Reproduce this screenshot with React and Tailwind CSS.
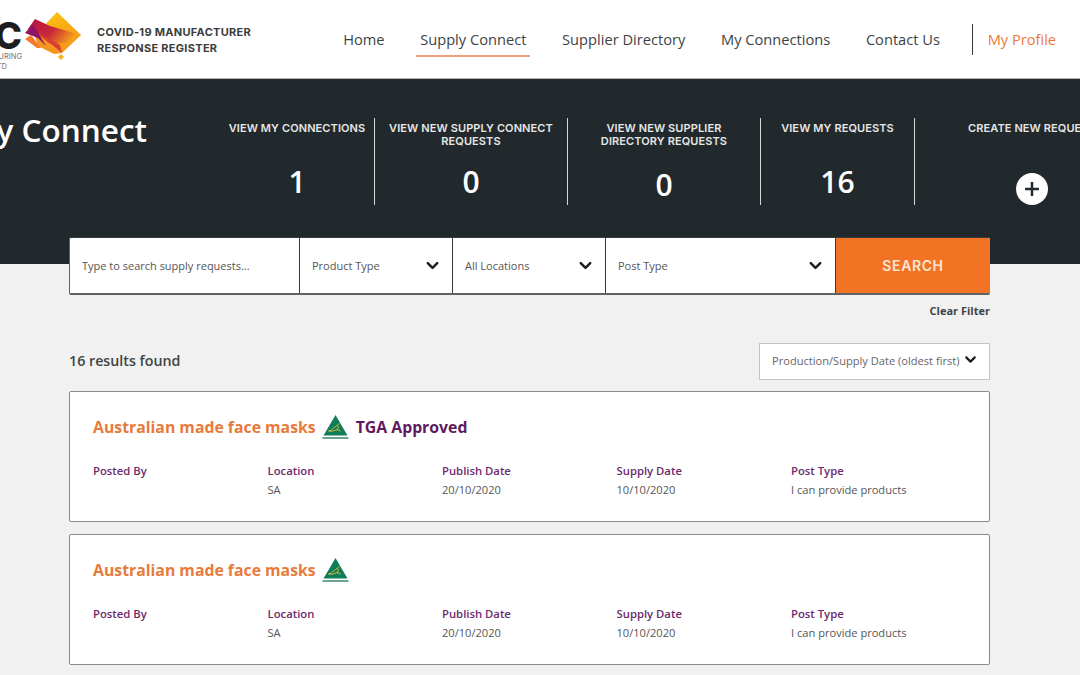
import React from 'react'
import { ChevronDown } from 'lucide-react'

const navItems = ['Home', 'Supply Connect', 'Supplier Directory', 'My Connections', 'Contact Us']

const stats = [
  { label: 'VIEW MY CONNECTIONS', value: '1', width: 'w-[155px] px-[4px]', pad: 'pt-[29px]' },
  { label: 'VIEW NEW SUPPLY CONNECT REQUESTS', value: '0', width: 'w-[193px] px-[4px]', pad: 'pt-[16px]' },
  { label: 'VIEW NEW SUPPLIER DIRECTORY REQUESTS', value: '0', width: 'w-[193px] px-[24px]', pad: 'pt-[19px]' },
  { label: 'VIEW MY REQUESTS', value: '16', width: 'w-[154px] px-[4px]', pad: 'pt-[29px]' },
]

const Logo = () => (
  <svg className="w-[60px] h-[50px] shrink-0 -mt-[4px]" viewBox="24 12 60 50">
    <defs>
      <linearGradient id="band" x1="0" y1="0" x2="1" y2="0.4">
        <stop offset="0" stopColor="#b5143f" />
        <stop offset="0.55" stopColor="#c9283a" />
        <stop offset="1" stopColor="#f7a01a" />
      </linearGradient>
      <linearGradient id="gold" x1="0" y1="0" x2="0.6" y2="1">
        <stop offset="0" stopColor="#fdc70f" />
        <stop offset="1" stopColor="#f7941d" />
      </linearGradient>
    </defs>
    <polygon points="57,12 81,35 62,53 40,30" fill="url(#gold)" />
    <polygon points="35,19 50,26 81,35 70,43 44,44 28,29" fill="url(#band)" />
    <polygon points="33,30 62,53 54,54 38,46" fill="#f7941d" />
    <polygon points="33,30 60,45 62,53" fill="#d8402c" />
    <polygon points="25,33 33,24 46,46 38,38" fill="#8f1464" />
    <polygon points="25,39 31,35 41,48 37,48" fill="#f47b2a" />
    <polygon points="61,54 64,57 61,60 58,57" fill="#f5b51e" />
  </svg>
)

const MadeLogo = () => (
  <svg className="w-[27px] h-[25px] shrink-0" viewBox="0 0 27 25">
    <polygon points="13.5,0 25.5,20.5 1.5,20.5" fill="#0f7d5a" />
    <path d="M6.500 16c2.500 0 3.500-1.500 5-3s3-1.500 4-3l2-1.500M15.500 10.500c1.500 1.500 1 3-.5 4l3.500 1.500M6.500 16c3 .5 5.500 0 8.500-1.500" fill="none" stroke="#f2c230" strokeWidth="0.900" />
    <rect x="0.500" y="22" width="26" height="2" fill="#6aa592" />
  </svg>
)

const Dropdown = ({ label, width }) => (
  <div className={`${width} h-full bg-white border-l border-[#33393c] flex items-center justify-between pl-3 pr-[10px] text-[11px] text-[#555]`}>
    <span className="pt-[2px]">{label}</span>
    <ChevronDown className="w-[19px] h-[19px] text-[#1a1a1a]" strokeWidth={3} />
  </div>
)

const Field = ({ label, value }) => (
  <div>
    <div className="text-[11.300px] leading-[16px] font-semibold text-[#6d2a6c]">{label}</div>
    <div className="text-[11.100px] leading-[16px] mt-[3px] text-[#555] h-4">{value}</div>
  </div>
)

const ResultCard = ({ tga }) => (
  <div className="h-[131px] bg-white border border-[#8a8a8a] rounded-[2px] pl-[23px] pt-[23px]">
    <div className="h-[25px] flex items-center">
      <span className="text-[15.800px] font-bold text-[#e87b3c]">Australian made face masks</span>
      <span className="ml-[6px]"><MadeLogo /></span>
      {tga && <span className="ml-[7px] text-[15.800px] font-bold text-[#5f1a5e]">TGA Approved</span>}
    </div>
    <div className="grid grid-cols-[174.5px_174.5px_174.5px_174.5px_174.5px] mt-[23px]">
      <Field label="Posted By" value="" />
      <Field label="Location" value="SA" />
      <Field label="Publish Date" value="20/10/2020" />
      <Field label="Supply Date" value="10/10/2020" />
      <Field label="Post Type" value="I can provide products" />
    </div>
  </div>
)

const App = () => {
  return (
    <div className="w-[1080px] h-[675px] overflow-hidden bg-[#f1f1f1] font-['Open_Sans',sans-serif]">
      <header className="h-[79px] bg-white border-b border-[#b5b5b5] flex items-center">
        <div className="w-[22px] mr-[2px] h-[60px] overflow-hidden shrink-0 flex flex-col items-end font-['Inter',sans-serif]">
          <div className="font-extrabold text-[37px] leading-[32px] mt-[11px] text-[#1d1d1d]">C</div>
          <div className="text-[7.500px] leading-[10px] mt-0 whitespace-nowrap text-[#777]">MANUFACTURING</div>
          <div className="text-[7.500px] leading-[10px] mr-[15px] whitespace-nowrap text-[#777]">LTD</div>
        </div>
        <Logo />
        <div className="ml-[13px] mt-[2px] font-['Inter',sans-serif] font-bold text-[11px] leading-[16px] tracking-[0.3px] text-[#3c3c3c]">
          <div>COVID-19 MANUFACTURER</div>
          <div>RESPONSE REGISTER</div>
        </div>
        <nav className="ml-[92px] flex items-center text-[14.650px] text-[#3e4345]">
          {navItems.map((item) => (
            <div key={item} className="relative mr-[35.700px] leading-[22px]">
              {item}
              {item === 'Supply Connect' && (
                <div className="absolute left-[-4px] right-[-4px] top-[27px] h-[2px] bg-[#eea27a]" />
              )}
            </div>
          ))}
          <div className="h-[31px] w-px bg-[#33393c] -ml-1" />
          <div className="ml-[15px] leading-[22px] text-[#e87b3c]">My Profile</div>
        </nav>
      </header>

      <section className="h-[185px] bg-[#22292d] flex items-start pt-[39px] text-white">
        <div className="w-[220px] shrink-0 -mt-[10px]">
          <div className="w-[147px] overflow-hidden whitespace-nowrap flex justify-end text-[31.500px] leading-[44px] font-semibold">
            <span className="shrink-0">Supply Connect</span>
          </div>
        </div>
        {stats.map((stat) => (
          <div key={stat.label} className={`${stat.width} shrink-0 h-[87px] border-r border-[#d5d7d8] pt-[4px] text-center`}>
            <div className="font-['Inter',sans-serif] font-semibold text-[11px] leading-[13px] tracking-[0.1px] text-[#e6e6e6]">{stat.label}</div>
            <div className={`${stat.pad} text-[30px] leading-[36px] font-semibold`}>{stat.value}</div>
          </div>
        ))}
        <div className="w-[234px] shrink-0 pt-[4px] text-center">
          <div className="font-['Inter',sans-serif] font-semibold text-[11px] leading-[13px] tracking-[0.1px] text-[#e6e6e6]">CREATE NEW REQUEST</div>
          <div className="mt-[38px] mx-auto w-8 h-8 rounded-full bg-white flex items-center justify-center">
            <svg className="w-[18px] h-[18px]" viewBox="0 0 18 18">
              <path d="M9 2v14M2 9h14" stroke="#22292d" strokeWidth="2.500" />
            </svg>
          </div>
        </div>
      </section>

      <main className="pl-[69px] pr-[90px]">
        <div className="-mt-[27px] h-[58px] flex rounded-[2px] border-b-2 border-l border-t border-[#5f6365] border-t-[#33393c] bg-white overflow-hidden relative">
          <div className="w-[229px] flex items-center pl-3 pt-[2px] text-[11px] text-[#555]">Type to search supply requests...</div>
          <Dropdown label="Product Type" width="w-[153px]" />
          <Dropdown label="All Locations" width="w-[153px]" />
          <Dropdown label="Post Type" width="w-[230px]" />
          <div className="flex-1 bg-[#f37324] border-l border-[#33393c] flex items-center justify-center font-['Inter',sans-serif] font-semibold text-[14px] tracking-[0.6px] text-[#fbe6d6]">SEARCH</div>
        </div>

        <div className="mt-[8px] text-right text-[11px] leading-4 font-bold text-[#3f4446]">Clear Filter</div>

        <div className="mt-[24px] flex items-center justify-between">
          <div className="text-[14.250px] font-semibold text-[#3f4446] -mt-[2px]">16 results found</div>
          <div className="w-[231px] h-[37px] bg-white border border-[#c4c4c4] flex items-center justify-between pl-[12px] pr-[10px] text-[11.100px] whitespace-nowrap text-[#666]">
            <span>Production/Supply Date (oldest first)</span>
            <ChevronDown className="w-[17px] h-[17px] text-[#1a1a1a] -mt-1" strokeWidth={3} />
          </div>
        </div>

        <div className="mt-[11px] flex flex-col gap-3">
          <ResultCard tga />
          <ResultCard />
        </div>
      </main>
    </div>
  )
}

export default App
